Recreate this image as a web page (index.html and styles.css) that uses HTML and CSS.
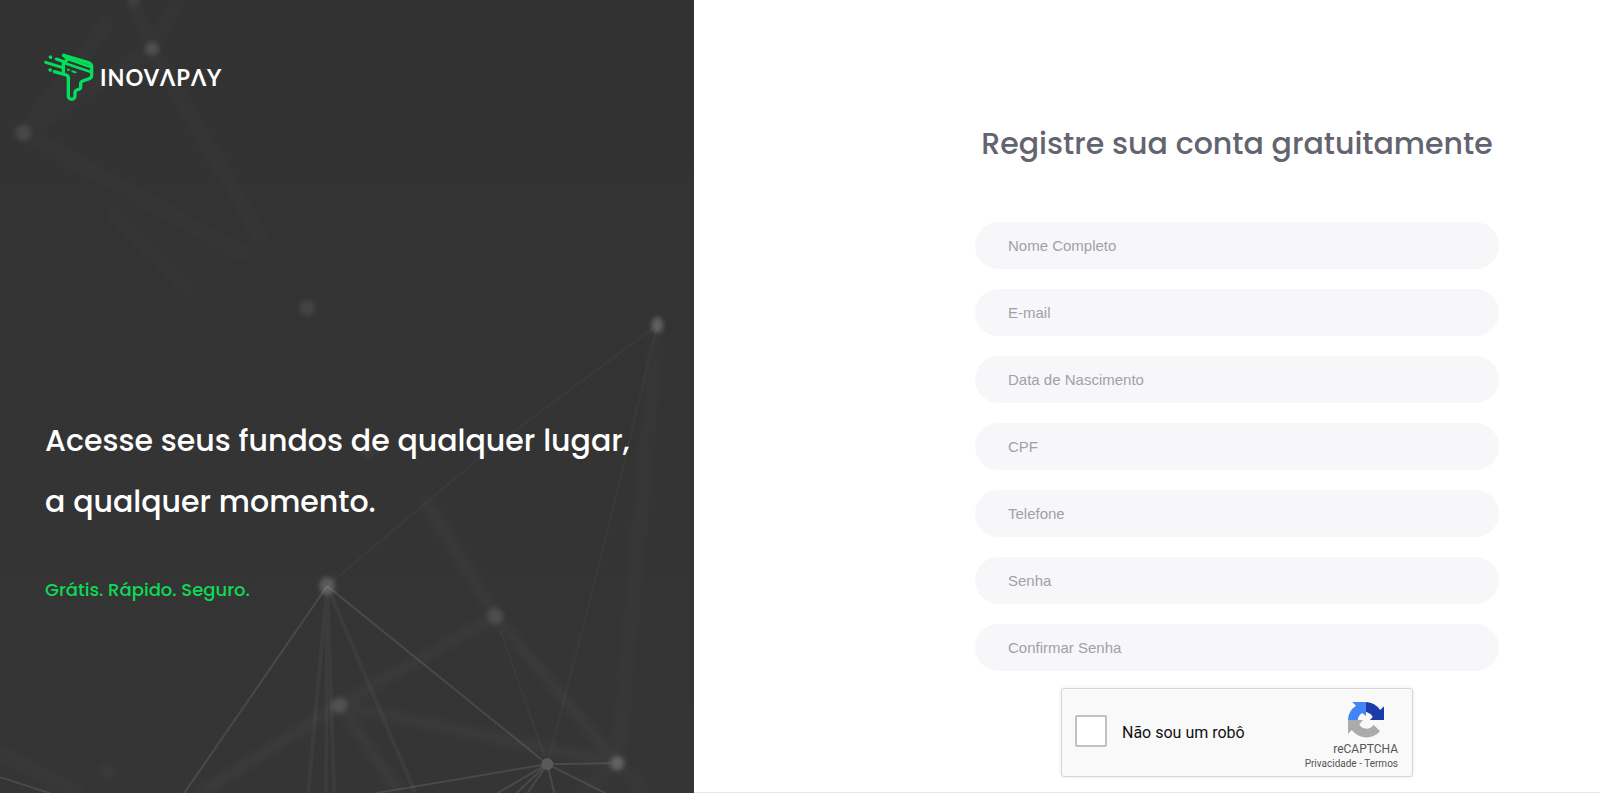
FILE: index.html
```html
<!DOCTYPE html>
<html lang="pt-BR">
  <head>
    <meta charset="UTF-8" />
    <meta name="viewport" content="width=device-width, initial-scale=1.0" />
    <title>InovaPay</title>
    <link rel="stylesheet" href="styles.css">
  </head>
  <body>
    <div class="page">
      <aside class="aside">
        <svg class="aside-bg" viewBox="0 0 694 793" preserveAspectRatio="xMidYMid slice" aria-hidden="true">
          <defs>
            <filter id="soft" x="-10%" y="-10%" width="120%" height="120%">
              <feGaussianBlur stdDeviation="3" />
            </filter>
            <filter id="dot" x="-10%" y="-10%" width="120%" height="120%">
              <feGaussianBlur stdDeviation="2" />
            </filter>
          </defs>
          <!-- out of focus links -->
          <g filter="url(#soft)" stroke="#fff" stroke-width="12" fill="none">
            <path stroke-opacity="0.016" d="M152 49L262 240M23 133L245 255M23 133L152 49M23 133L110 20M152 49L133 2M152 49L178 0M110 210L190 290" />
            <path stroke-opacity="0.022" d="M495 616L617 763M495 616L339 705M495 616L425 500M339 705L617 763M339 705L200 793M339 705L400 793" />
            <path stroke-opacity="0.016" d="M617 763L657 325M617 763L580 793M617 763L645 793M0 752L80 793" />
          </g>
          <!-- sharp links -->
          <g stroke="#fff" fill="none">
            <path stroke-opacity="0.1" stroke-width="2" d="M327 586L547 764M327 586L184 793M547 764L375 793M547 764L497 793M547 764L516 793M547 764L527 793M547 764L554 793M547 764L605 793M547 764L610 763M0 777L50 793" />
            <path stroke-opacity="0.04" stroke-width="4" d="M327 586L308 793M327 586L326 793M327 586L415 793M327 586L334 793" />
            <path stroke-opacity="0.03" stroke-width="2" d="M327 586L486 452L657 325M547 764L600 560L657 325M547 764L500 630" />
          </g>
          <g filter="url(#dot)" fill="#fff">
            <ellipse cx="327" cy="586" rx="8" ry="9" fill-opacity="0.18" />
            <circle cx="495" cy="616" r="8" fill-opacity="0.1" />
            <circle cx="339" cy="705" r="8" fill-opacity="0.12" />
            <circle cx="617" cy="763" r="7" fill-opacity="0.2" />
            <ellipse cx="657" cy="325" rx="6" ry="8" fill-opacity="0.2" />
            <circle cx="307" cy="308" r="8" fill-opacity="0.08" />
            <circle cx="152" cy="49" r="7" fill-opacity="0.12" />
            <circle cx="23" cy="133" r="8" fill-opacity="0.09" />
            <circle cx="368" cy="452" r="7" fill-opacity="0.04" />
            <circle cx="133" cy="1" r="6" fill-opacity="0.06" />
            <circle cx="107" cy="771" r="8" fill-opacity="0.02" />
          </g>
          <circle cx="547" cy="764" r="6" fill="#595959" />
        </svg>

        <a class="logo" href="#" aria-label="INOVAPAY">
          <svg class="logo-mark" viewBox="0 0 162 162" aria-hidden="true">
            <g fill="none" stroke="#00e05a" stroke-width="10" stroke-linecap="round" stroke-linejoin="round">
              <path d="M65 16L139 38Q149 41 149 51V76Q149 83 142 86L122 93Q116 95 116 102V110Q116 116 110 118L104 120Q99 122 99 129V138A10 10 0 0 1 79 138V84Q79 77 73 75L37 65" />
              <path d="M65 16L77 27L64 42V70" />
              <path stroke-width="8" d="M80 28L146 51M69 40L147 66" />
              <path stroke-width="9" d="M11 37L62 53M43 27L68 36" />
              <path d="M78 59L80 60M91 64L101 67" stroke-width="6" />
              <path d="M25 21L26 22M24 60L25 60" />
            </g>
          </svg>
          <span class="logo-text">INOVΛPΛY</span>
        </a>

        <div class="pitch">
          <h1 class="pitch-title">Acesse seus fundos de qualquer lugar,<br>a qualquer momento.</h1>
          <p class="pitch-text">Grátis. Rápido. Seguro.</p>
        </div>
      </aside>

      <main class="content">
        <form class="form">
          <h2 class="form-title">Registre sua conta gratuitamente</h2>
          <div class="fields">
            <input class="field" type="text" name="nome" placeholder="Nome Completo" aria-label="Nome Completo" />
            <input class="field" type="email" name="email" placeholder="E-mail" aria-label="E-mail" />
            <input class="field" type="text" name="nascimento" placeholder="Data de Nascimento" aria-label="Data de Nascimento" />
            <input class="field" type="text" name="cpf" placeholder="CPF" aria-label="CPF" />
            <input class="field" type="tel" name="telefone" placeholder="Telefone" aria-label="Telefone" />
            <input class="field" type="password" name="senha" placeholder="Senha" aria-label="Senha" />
            <input class="field" type="password" name="confirmar" placeholder="Confirmar Senha" aria-label="Confirmar Senha" />
          </div>

          <div class="captcha">
            <input class="captcha-check" type="checkbox" id="robot" />
            <label class="captcha-label" for="robot">Não sou um robô</label>
            <div class="captcha-brand">
              <svg class="captcha-logo" viewBox="0 0 64 64" aria-hidden="true">
                <path fill="#1c3aa9" d="M64 31.96V7.5l-6.8 6.9A32 32 0 0 0 32 0v17.5l3.6 1.6A14 14 0 0 1 44 26.5l-5 5.4z" />
                <path fill="#4285f4" d="M32 0H7.5l6.8 6.8A32 32 0 0 0 0 32h17.4a15 15 0 0 1 8-12.6l6.6 5.6z" />
                <path fill="#ababab" d="M0 32v24.5l6.8-6.8A32 32 0 0 0 57 52L45.5 40.5A15 15 0 0 1 20 40l6.6-8z" />
              </svg>
              <span class="captcha-name">reCAPTCHA</span>
              <span class="captcha-links"><a href="#">Privacidade</a> - <a href="#">Termos</a></span>
            </div>
          </div>
        </form>
      </main>
    </div>
  </body>
</html>
```
FILE: styles.css
```css
* {
  box-sizing: border-box;
}
body {
  margin: 0;
  background: #fff;
  font-family: Poppins, Inter, sans-serif;
}
a {
  color: inherit;
  text-decoration: none;
}
.page {
  display: flex;
  min-height: 100vh;
}
.aside {
  position: relative;
  width: 43.4%;
  padding: 50px 42px;
  background: linear-gradient(#323232, #353535);
  color: #fff;
  overflow: hidden;
}
.aside-bg {
  position: absolute;
  top: 0;
  left: 0;
  width: 100%;
  height: 100%;
}
.logo {
  position: relative;
  display: flex;
  align-items: center;
  gap: 4px;
}
.logo-mark {
  width: 54px;
  height: 54px;
}
.logo-text {
  font-family: Lato, sans-serif;
  font-size: 22px;
  font-weight: 700;
  letter-spacing: 1px;
}
.pitch {
  position: relative;
  margin-top: 306px;
  padding-left: 3px;
}
.pitch-title {
  margin: 0;
  font-size: 30px;
  font-weight: 500;
  line-height: 61px;
  white-space: nowrap;
}
.pitch-text {
  margin: 40px 0 0;
  color: #0fd857;
  font-size: 18px;
  font-weight: 500;
  line-height: 36px;
}
.content {
  flex: 1;
  display: flex;
  justify-content: flex-end;
  padding: 120px 101px 15px 20px;
  border-bottom: 1px solid #e8e8e8;
}
.form {
  display: flex;
  flex-direction: column;
  align-items: center;
  width: 524px;
}
.form-title {
  margin: 0;
  color: #646370;
  font-size: 30px;
  font-weight: 500;
  line-height: 48px;
  white-space: nowrap;
}
.fields {
  display: flex;
  flex-direction: column;
  gap: 20px;
  width: 100%;
  margin-top: 54px;
}
.field {
  width: 100%;
  height: 47px;
  padding: 0 33px;
  border: none;
  border-radius: 24px;
  background: #f7f7f9;
  color: #575962;
  font-family: "Liberation Sans", Arial, sans-serif;
  font-size: 15px;
  outline: none;
}
.field::placeholder {
  color: #a0a1a8;
}
.captcha {
  display: flex;
  align-items: center;
  width: 352px;
  height: 89px;
  margin-top: 17px;
  padding: 0 14px 0 13px;
  border: 1px solid #d6d6d6;
  border-radius: 3px;
  background: #f9f9f9;
  box-shadow: 0 0 4px rgba(0, 0, 0, 0.08);
  font-family: Roboto, sans-serif;
}
.captcha-check {
  appearance: none;
  width: 32px;
  height: 32px;
  margin: 0 0 4px;
  border: 2px solid #c1c1c1;
  border-radius: 2px;
  background: #fff;
  cursor: pointer;
}
.captcha-label {
  margin-left: 15px;
  color: #111;
  font-size: 16px;
}
.captcha-brand {
  display: flex;
  flex-direction: column;
  align-items: flex-end;
  margin-left: auto;
  padding-top: 8px;
  color: #555;
}
.captcha-logo {
  width: 36px;
  height: 36px;
  margin-right: 14px;
}
.captcha-name {
  margin-top: 3px;
  font-size: 12px;
  line-height: 16px;
}
.captcha-links {
  font-size: 10px;
  line-height: 14px;
}
```
